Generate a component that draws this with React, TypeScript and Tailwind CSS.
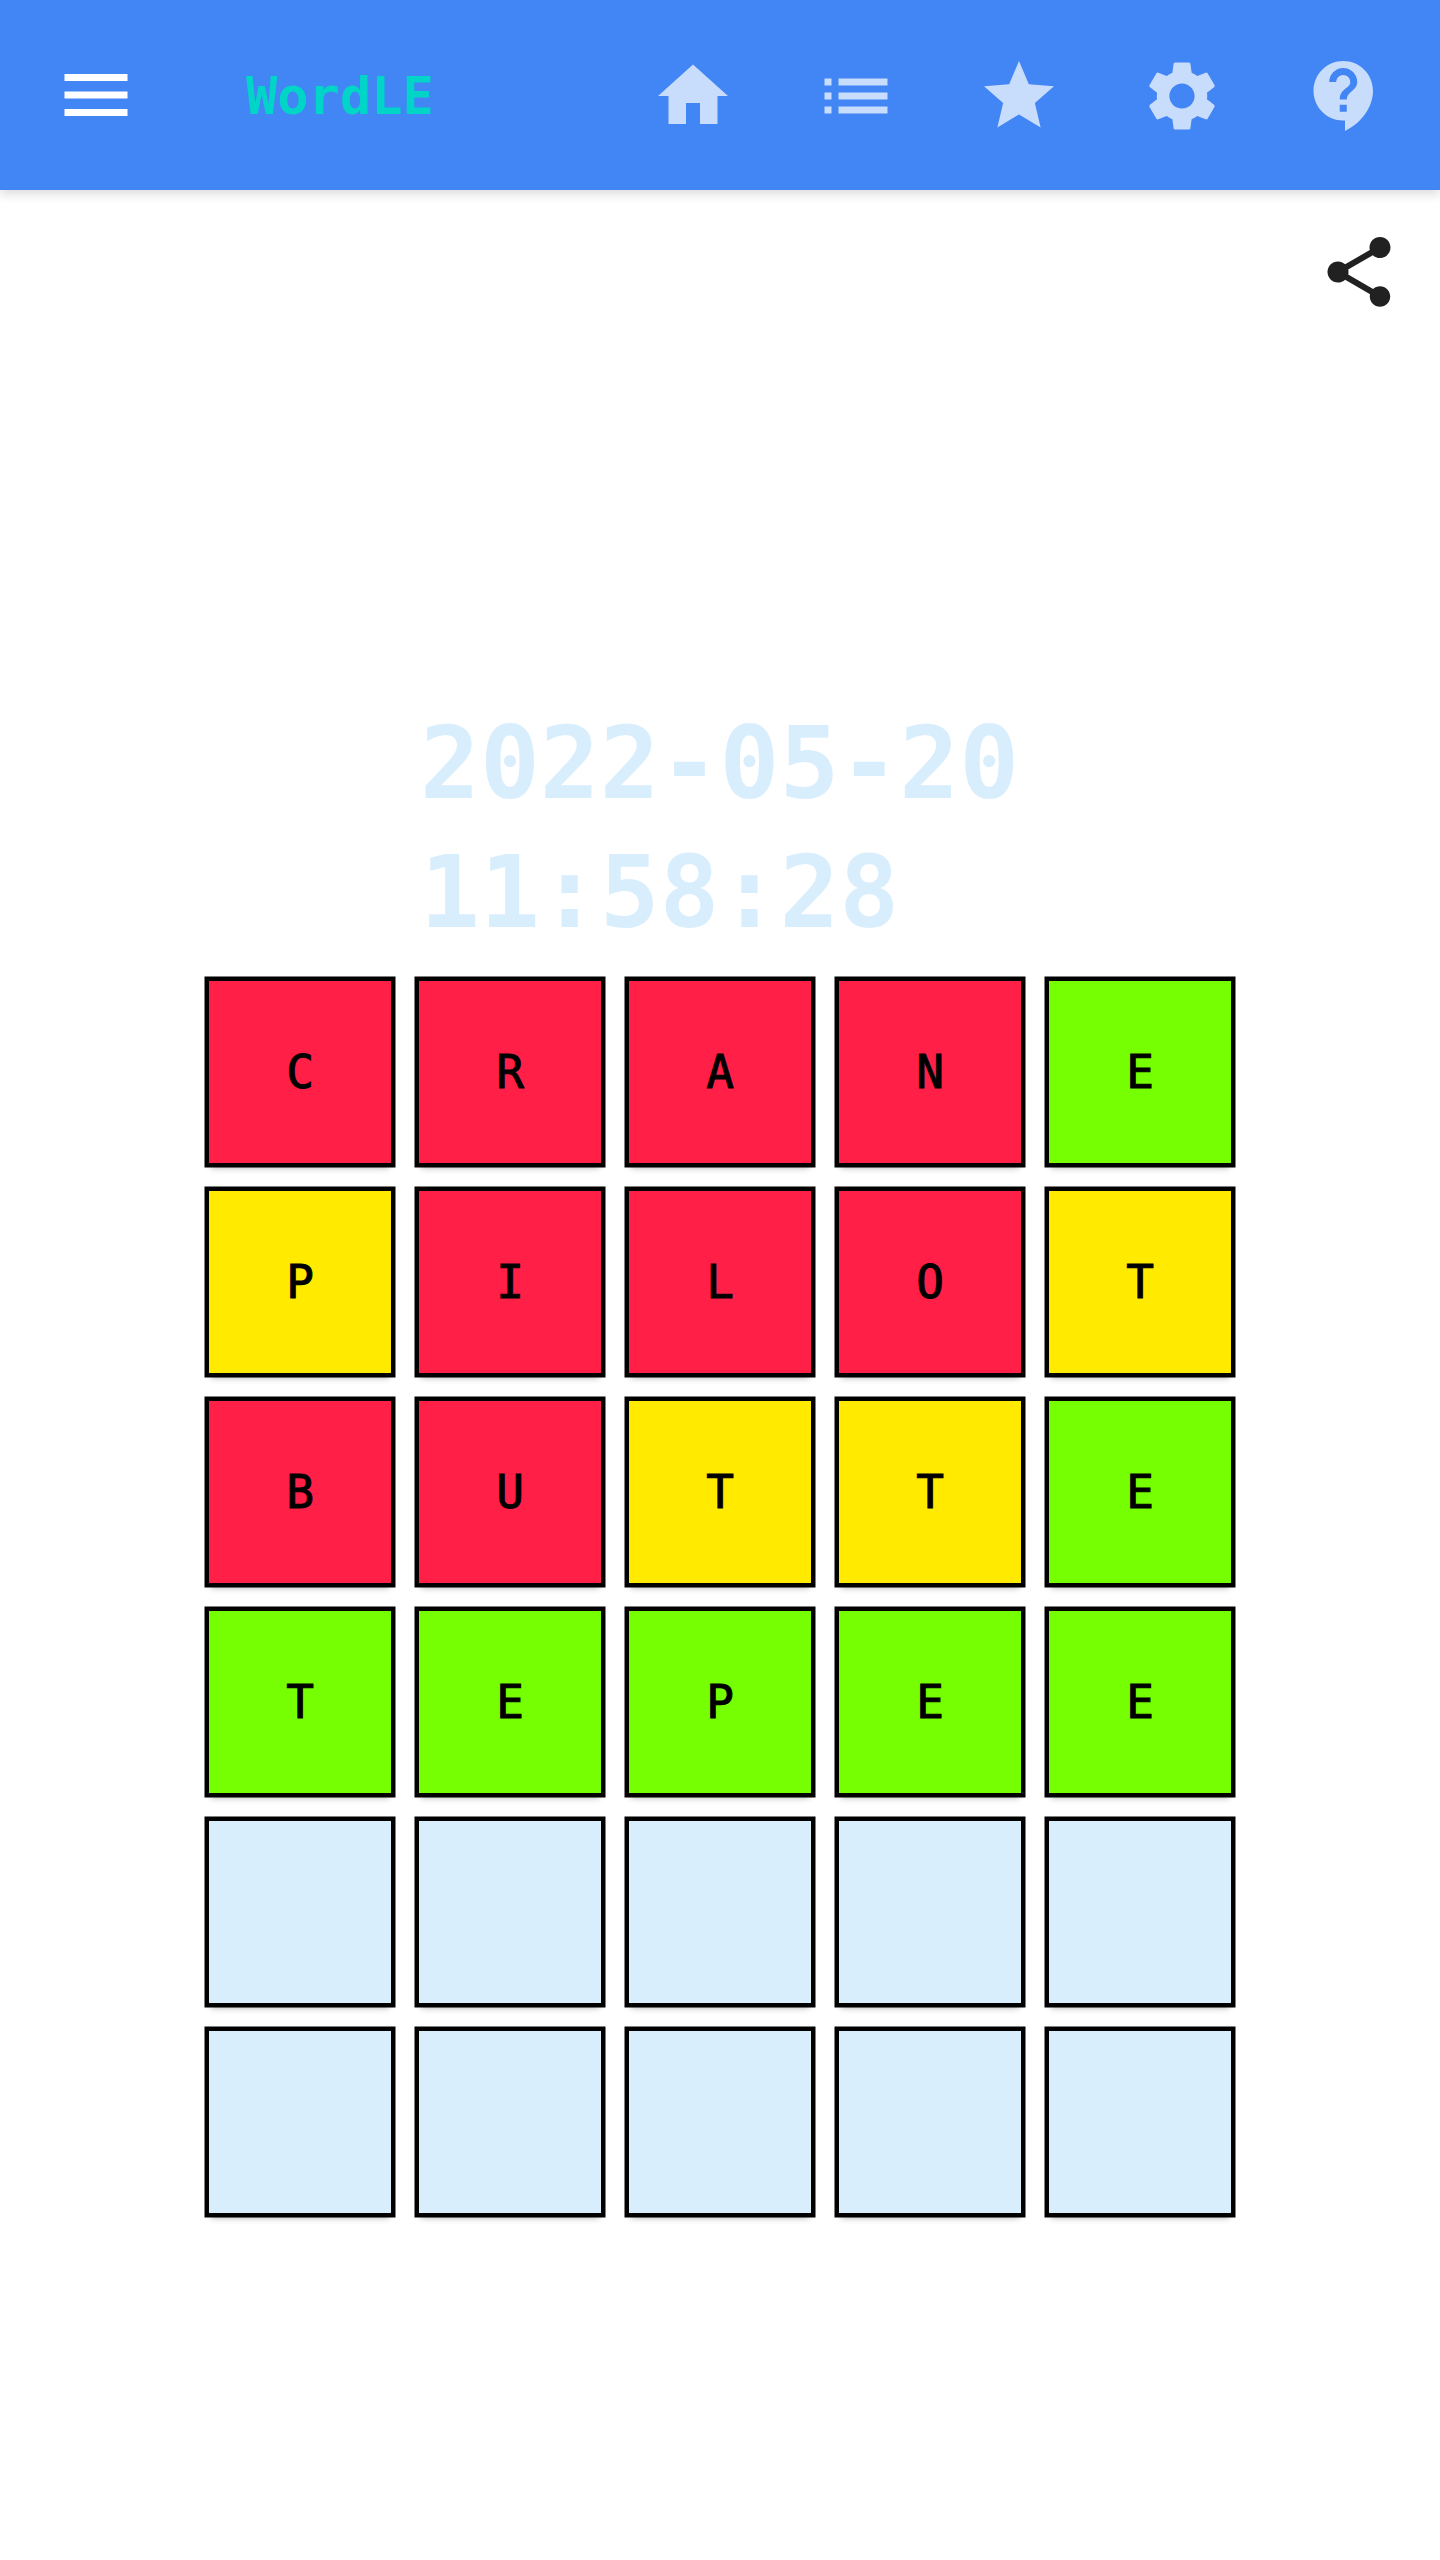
import { MdMenu, MdHome, MdList, MdStar, MdSettings, MdContactSupport, MdShare } from 'react-icons/md';

type Tile = 'miss' | 'near' | 'hit' | 'empty';

const colors: Record<Tile, string> = {
  miss: 'bg-[#ff1f47]',
  near: 'bg-[#ffea00]',
  hit: 'bg-[#76ff03]',
  empty: 'bg-[#d9eefd]',
};

const rows: { word: string; marks: Tile[] }[] = [
  { word: 'CRANE', marks: ['miss', 'miss', 'miss', 'miss', 'hit'] },
  { word: 'PILOT', marks: ['near', 'miss', 'miss', 'miss', 'near'] },
  { word: 'BUTTE', marks: ['miss', 'miss', 'near', 'near', 'hit'] },
  { word: 'TEPEE', marks: ['hit', 'hit', 'hit', 'hit', 'hit'] },
  { word: '     ', marks: ['empty', 'empty', 'empty', 'empty', 'empty'] },
  { word: '     ', marks: ['empty', 'empty', 'empty', 'empty', 'empty'] },
];

const navIcons = [MdHome, MdList, MdStar, MdSettings, MdContactSupport];

export default function App() {
  return (
    <div className="min-h-[2560px] bg-white font-['DejaVu_Sans_Mono',monospace]">
      {/* Toolbar */}
      <header className="flex h-[190px] items-center bg-[#4285f4] pl-[54px] pr-[53px] shadow-[0_4px_10px_rgba(0,0,0,0.15)]">
        <MdMenu className="h-[84px] w-[84px] text-white" />
        <h1 className="ml-[108px] pt-[2px] text-[52px] leading-none font-bold text-[#00d5c8]">WordLE</h1>
        <nav className="ml-auto flex gap-[79px] pt-[2px]">
          {navIcons.map((Icon, i) => (
            <Icon key={i} className="h-[84px] w-[84px] text-[#c8dcfc]" />
          ))}
        </nav>
      </header>

      {/* Share */}
      <div className="flex justify-end pt-[40px] pr-[39px]">
        <MdShare className="h-[84px] w-[84px] text-[#212121]" />
      </div>

      {/* Timestamp */}
      <p className="mx-auto mt-[385px] w-[600px] text-[99.5px] leading-[129px] font-bold text-[#d9eefd]">
        2022-05-20 11:58:28
      </p>

      {/* Board */}
      <div className="mx-auto mt-[20px] grid w-[1030px] grid-cols-5 gap-[20px]">
        {rows.map((row, r) =>
          row.marks.map((mark, c) => (
            <div
              key={`${r}-${c}`}
              className={`flex h-[190px] w-[190px] items-center justify-center border-4 border-black text-[46px] text-black shadow-[0_0_0_0.5px_black,0_7px_6px_-6px_rgba(0,0,0,0.3)] [-webkit-text-stroke:1px_black] ${colors[mark]}`}
            >
              {row.word[c]}
            </div>
          ))
        )}
      </div>
    </div>
  );
}
